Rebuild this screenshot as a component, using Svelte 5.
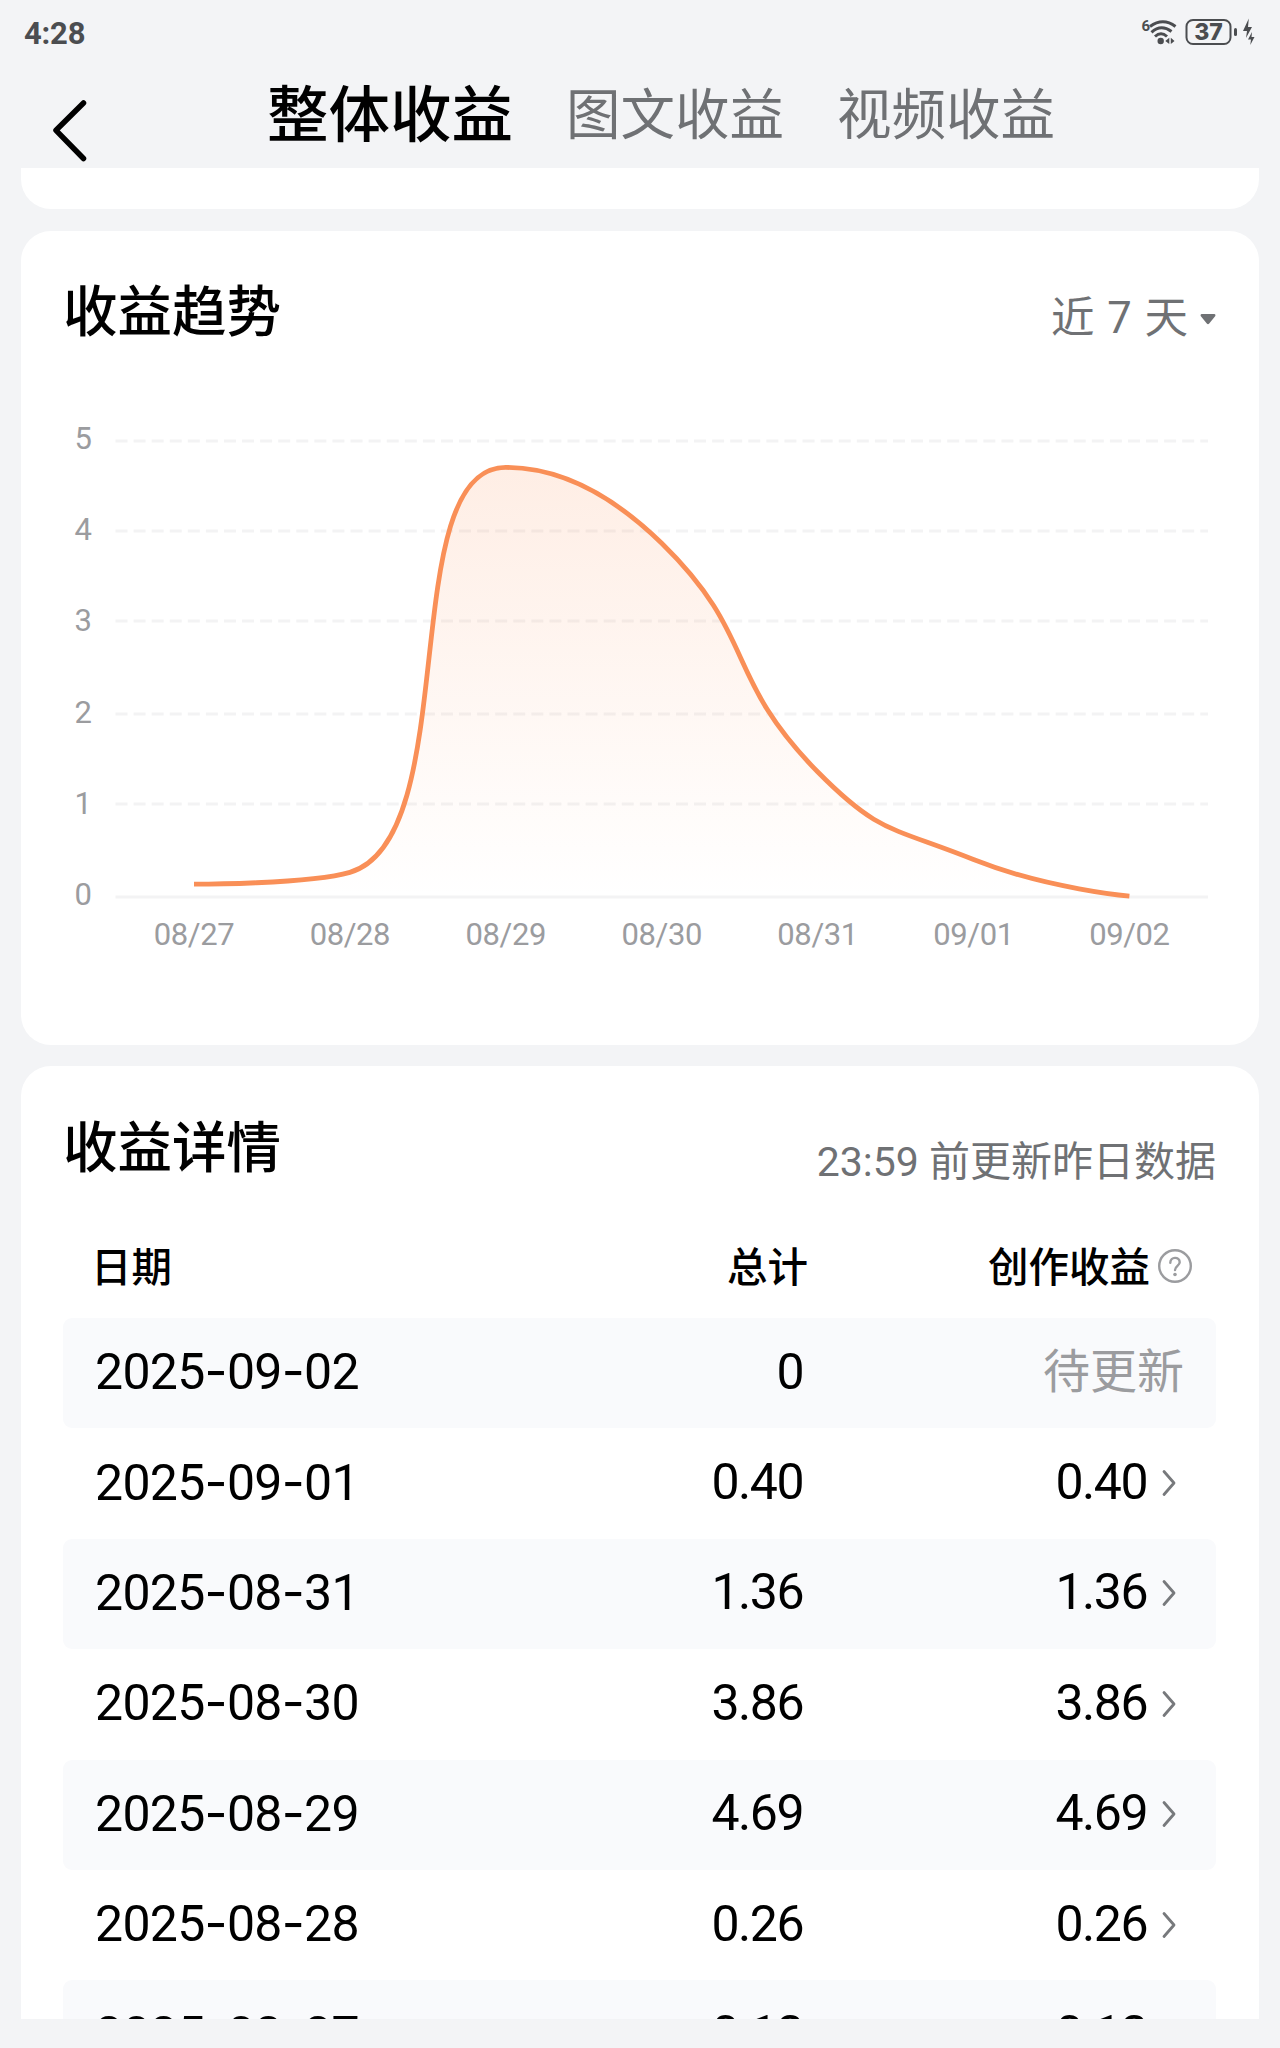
<script lang="ts">
  interface Day {
    date: string;
    total: number;
  }

  const tabs = ["整体收益", "图文收益", "视频收益"];
  let activeTab = $state(0);

  // newest first, the way the table lists them
  const days: Day[] = [
    { date: "2025-09-02", total: 0 },
    { date: "2025-09-01", total: 0.4 },
    { date: "2025-08-31", total: 1.36 },
    { date: "2025-08-30", total: 3.86 },
    { date: "2025-08-29", total: 4.69 },
    { date: "2025-08-28", total: 0.26 },
    { date: "2025-08-27", total: 0.13 },
  ];

  const format = (n: number) => (n === 0 ? "0" : n.toFixed(2));

  // chart geometry
  const ticks = [5, 4, 3, 2, 1, 0];
  const top = 21;
  const unit = 91.2;
  const base = top + unit * 5;
  // grid lines snap to whole 3px steps
  const gridY = (tick: number) => top + Math.floor(((5 - tick) * unit) / 3) * 3;
  const points = [...days].reverse().map((d, i) => ({
    x: 130 + i * 155.9,
    y: base - 0.9 - d.total * (unit + 0.2),
    label: d.date.slice(5).replace("-", "/"),
  }));

  const clamp = (v: number, a: number, b: number) =>
    Math.max(Math.min(a, b), Math.min(v, Math.max(a, b)));

  // bezier through the points, control points never overshoot their segment
  function smoothLine(pts: { x: number; y: number }[], smooth = 0.5) {
    let d = `M${pts[0].x} ${pts[0].y}`;
    let cp = { x: pts[0].x, y: pts[0].y };
    for (let i = 1; i < pts.length; i++) {
      const prev = pts[i - 1];
      const cur = pts[i];
      const next = pts[i + 1];
      let cp1 = { x: cur.x, y: cur.y };
      let nextCp = { x: cur.x, y: cur.y };
      if (next) {
        const lenPrev = Math.hypot(cur.x - prev.x, cur.y - prev.y);
        const lenNext = Math.hypot(next.x - cur.x, next.y - cur.y);
        const ratio = lenNext / (lenNext + lenPrev);
        const place = (k: "x" | "y") => {
          const v = (next[k] - prev[k]) * smooth;
          let n = clamp(cur[k] + v * ratio, next[k], cur[k]);
          const c = clamp(cur[k] - ((n - cur[k]) * lenPrev) / lenNext, prev[k], cur[k]);
          n = cur[k] + ((cur[k] - c) * lenNext) / lenPrev;
          cp1[k] = c;
          nextCp[k] = n;
        };
        place("x");
        place("y");
      }
      d += ` C${cp.x} ${cp.y} ${cp1.x} ${cp1.y} ${cur.x} ${cur.y}`;
      cp = nextCp;
    }
    return d;
  }

  const line = smoothLine(points);
  const area = `${line} V${base} H${points[0].x} Z`;
</script>

<div class="screen">
  <div class="status">
    <span class="time">4:28</span>
    <svg width="120" height="36" viewBox="1138 14 120 36">
      <text x="1141.5" y="31" class="wifi-gen">6</text>
      <g fill="none" stroke="#4b4d50" stroke-width="3">
        <path d="M1150 26.5 Q1163 17 1175.500 26.500" />
        <path d="M1151.500 32.300 Q1161 23.500 1171.500 31.500" />
        <path d="M1155 36.500 Q1161 31 1167 36.500" />
        <rect x="1186.500" y="20" width="44" height="24" rx="6.500" stroke-width="2" />
      </g>
      <g fill="#4b4d50">
        <circle cx="1160.700" cy="41" r="3.200" />
        <path d="M1169.300 37.800 V44 L1165.300 41 Z M1170.800 37.800 V44 L1174.500 41 Z" />
        <rect x="1234" y="28" width="3" height="8" rx="1.500" />
        <path d="M1248.800 18.500 L1243 31 H1247 L1246 38 L1252 27 H1248 Z" />
        <path d="M1252 32 L1248 39.500 H1251 L1250.300 45 L1254.500 37 H1251.500 Z" />
      </g>
      <text x="1208.500" y="40.200" text-anchor="middle" class="battery">37</text>
    </svg>
  </div>

  <header>
    <button class="back" aria-label="返回">
      <svg width="40" height="68" viewBox="0 0 40 68">
        <path d="M32.500 7 L5 34.300 L32.500 62.500" />
      </svg>
    </button>
    <nav>
      {#each tabs as tab, i}
        <button class="tab" class:active={activeTab === i} onclick={() => (activeTab = i)}>{tab}</button>
      {/each}
    </nav>
  </header>

  <main>
    <section class="card previous"></section>

    <section class="card trend">
      <div class="card-head">
        <h2>收益趋势</h2>
        <span class="range">
          近 7 天
          <svg width="16" height="12" viewBox="0 0 16 12">
            <path d="M1.500 1 H14.500 Q16 1.500 15.300 3 L9.200 10.500 Q8 11.800 6.800 10.500 L0.700 3 Q0 1.500 1.500 1 Z" />
          </svg>
        </span>
      </div>
      <svg class="chart" width="1152" height="560" viewBox="0 0 1152 560">
        <defs>
          <linearGradient id="fade" x1="0" y1="0" x2="0" y2="1">
            <stop offset="0" stop-color="#fb8c50" stop-opacity="0.15" />
            <stop offset="1" stop-color="#fb8c50" stop-opacity="0" />
          </linearGradient>
        </defs>
        {#each ticks as tick}
          {@const y = gridY(tick)}
          <line class="grid" class:dashed={tick > 0} x1="51.500" x2="1144" y1={y} y2={y} />
          <text class="tick" x="19" y={base - tick * unit + 8} text-anchor="middle">{tick}</text>
        {/each}
        <path d={area} fill="url(#fade)" />
        <path class="line" d={line} />
        {#each points as p}
          <text class="tick" x={p.x} y={base + 48} text-anchor="middle">{p.label}</text>
        {/each}
      </svg>
    </section>

    <section class="card details">
      <div class="card-head">
        <h2>收益详情</h2>
        <span class="note">23:59 前更新昨日数据</span>
      </div>
      <div class="row labels">
        <span>日期</span>
        <span class="total">总计</span>
        <span class="income">
          创作收益
          <svg width="34" height="34" viewBox="0 0 34 34">
            <circle cx="17" cy="17" r="15.800" />
            <path d="M12.300 13.800 C12.300 7.300 21.700 7.300 21.700 13.300 C21.700 16.800 17 17 17 21" />
            <circle class="dot" cx="17" cy="25.500" r="1.800" />
          </svg>
        </span>
      </div>
      {#each days as day, i}
        <div class="row" class:striped={i % 2 === 0}>
          <span class="date">
            {#each day.date.split("-") as part, n}{#if n > 0}<i>-</i>{/if}{part}{/each}
          </span>
          <span class="total">{format(day.total)}</span>
          {#if i === 0}
            <span class="income pending">待更新</span>
          {:else}
            <span class="income">
              {format(day.total)}
              <svg width="14" height="30" viewBox="0 0 14 30">
                <path d="M2 3.500 L12 15 L2 26.500" />
              </svg>
            </span>
          {/if}
        </div>
      {/each}
    </section>
  </main>
</div>

<style>
  :global(body) {
    margin: 0;
    background: #f3f4f6;
  }
  .screen {
    width: 1280px;
    height: 2048px;
    overflow: hidden;
    display: flex;
    flex-direction: column;
    box-sizing: border-box;
    padding-bottom: 29px;
    background: #f3f4f6;
    color: #000;
    font-family: Roboto, "Noto Sans CJK SC", sans-serif;
  }
  button {
    border: none;
    background: none;
    padding: 0;
    font-family: inherit;
  }

  .status {
    height: 64px;
    flex: none;
    display: flex;
    justify-content: space-between;
    align-items: center;
    padding: 0 22px 0 24px;
    box-sizing: border-box;
  }
  .time {
    font-size: 31px;
    font-weight: 700;
    line-height: 36px;
    color: #4b4d50;
    margin-top: 3px;
    letter-spacing: -0.2px;
  }
  .wifi-gen {
    font-size: 15px;
    font-weight: 700;
    fill: #4b4d50;
  }
  .battery {
    font-size: 23px;
    font-weight: 800;
    font-family: Inter, sans-serif;
    fill: #4b4d50;
  }

  header {
    height: 104px;
    flex: none;
    display: flex;
    align-items: flex-start;
  }
  .back {
    margin: 32px 0 0 51px;
    width: 40px;
    height: 68px;
  }
  .back path {
    fill: none;
    stroke: #000;
    stroke-width: 5.5;
    stroke-linecap: round;
    stroke-linejoin: round;
  }
  nav {
    display: flex;
    align-items: center;
    gap: 53px;
    height: 90px;
    margin: 2px 0 0 176px;
  }
  .tab {
    font-size: 54.5px;
    line-height: 90px;
    font-family: "Noto Sans CJK SC", sans-serif;
    color: #6f7174;
  }
  .tab.active {
    font-size: 61.5px;
    font-weight: 500;
    color: #000;
  }

  main {
    flex: 1;
    min-height: 0;
    overflow: hidden;
    padding: 0 21px;
    display: flex;
    flex-direction: column;
    gap: 21.5px;
  }
  .card {
    flex: none;
    background: #fff;
    border-radius: 30px;
    box-sizing: border-box;
    padding: 0 43px;
  }
  .previous {
    height: 41px;
    border-radius: 0 0 30px 30px;
  }
  .trend {
    height: 814px;
  }
  .card-head {
    display: flex;
    justify-content: space-between;
    height: 189px;
  }
  h2 {
    margin: 37.5px 0 0 -1px;
    font-size: 54.5px;
    line-height: 80px;
    font-weight: 500;
    font-family: "Noto Sans CJK SC", sans-serif;
  }
  .range,
  .note {
    font-size: 41px;
    line-height: 60px;
    color: #6f7174;
  }
  .range {
    display: flex;
    align-items: center;
    gap: 12px;
    height: 60px;
    margin-top: 58px;
    font-size: 43.5px;
    word-spacing: 2px;
  }
  .range path {
    fill: #6f7174;
  }

  .chart {
    display: block;
  }
  .grid {
    stroke: #f3f3f4;
    stroke-width: 3;
  }
  .dashed {
    stroke-dasharray: 12 6.08;
  }
  .tick {
    font-size: 31px;
    letter-spacing: -0.4px;
    fill: #9b9c9f;
  }
  .line {
    fill: none;
    stroke: #f98f57;
    stroke-width: 4.8;
  }

  .details {
    padding-left: 42px;
  }
  .details .card-head {
    height: 153px;
  }
  .details h2 {
    margin-left: 0;
  }
  .note {
    margin-top: 66px;
  }
  .row {
    display: grid;
    grid-template-columns: 300px 417px 1fr;
    align-items: center;
    height: 110.4px;
    box-sizing: border-box;
    padding: 0 32px 3px;
    border-radius: 9px;
    font-size: 50px;
    line-height: 60px;
    letter-spacing: -1.5px;
  }
  .striped {
    background: #f9fafc;
  }
  .labels {
    height: 99px;
    padding: 0 24px 7px 28px;
    font-size: 40.5px;
    font-weight: 500;
    font-family: "Noto Sans CJK SC", sans-serif;
    letter-spacing: 0;
  }
  .date {
    letter-spacing: -0.7px;
  }
  .date i {
    font-style: normal;
    font-family: Inter, sans-serif;
  }
  .total {
    text-align: right;
    padding-right: 9px;
  }
  .labels .total {
    padding-right: 0;
  }
  .income {
    display: flex;
    align-items: center;
    justify-content: flex-end;
    gap: 15px;
  }
  .income svg {
    position: relative;
    top: 1px;
  }
  .income path,
  .income circle {
    fill: none;
    stroke: #77797c;
    stroke-width: 2.8;
    stroke-linecap: round;
    stroke-linejoin: round;
  }
  .row:not(.labels) .income:not(.pending) {
    padding-right: 8px;
  }
  .labels .income {
    gap: 8px;
  }
  .labels .income path,
  .labels .income circle {
    stroke: #9b9c9f;
    stroke-width: 2.4;
  }
  .labels .income .dot {
    fill: #9b9c9f;
    stroke: none;
  }
  .pending {
    font-size: 47px;
    letter-spacing: 0;
    color: #9b9c9f;
  }
</style>
